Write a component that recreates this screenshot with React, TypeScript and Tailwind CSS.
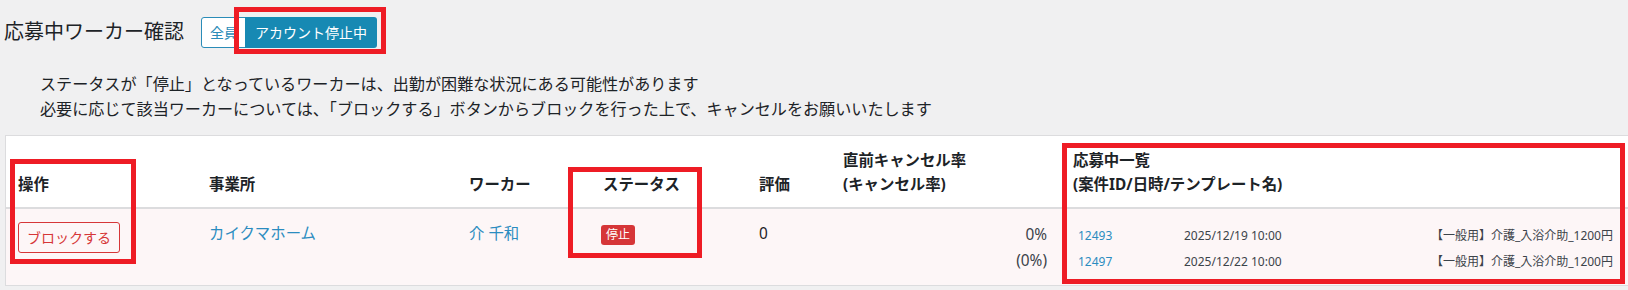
const font = "font-['Noto_Sans','Noto_Sans_CJK_JP',sans-serif]";

const applications = [
  { id: '12493', date: '2025/12/19 10:00', template: '【一般用】介護_入浴介助_1200円' },
  { id: '12497', date: '2025/12/22 10:00', template: '【一般用】介護_入浴介助_1200円' },
];

const cols = 'grid grid-cols-[191px_260px_134px_156px_84px_230px_1fr]';

function RedBox({ className }: { className: string }) {
  return <div className={`pointer-events-none absolute border-[5px] border-[#ee1c25] ${className}`} />;
}

export default function App() {
  return (
    <div className={`relative h-[290px] overflow-hidden bg-[#f0f0f1] text-[#1d2327] ${font}`}>
      <div className="flex h-[64px] items-center pl-[4px]">
        <h1 className="text-[20px] leading-none font-normal">応募中ワーカー確認</h1>
        <div className="ml-[17px] flex h-[31px] text-[14px]">
          <button className="rounded-l-[3px] border border-[#2a8cb8] bg-white px-[8px] text-[#2a8cb8]">全員</button>
          <button className="-ml-[2px] rounded-r-[3px] bg-[#1789b3] px-[10px] text-white">アカウント停止中</button>
        </div>
      </div>

      <div className="pt-[8px] pl-[40px] text-[16.1px] leading-[25px]">
        <p>ステータスが「停止」となっているワーカーは、出勤が困難な状況にある可能性があります</p>
        <p>必要に応じて該当ワーカーについては、「ブロックする」ボタンからブロックを行った上で、キャンセルをお願いいたします</p>
      </div>

      <div className="mt-[13px] ml-[5px] border-t border-l border-[#dcdcde] bg-white text-[15.4px]">
        <div className={`${cols} border-b-2 border-[#dcdcde] font-bold leading-[24px]`}>
          {[['操作'], ['事業所'], ['ワーカー'], ['ステータス'], ['評価'], ['直前キャンセル率', '(キャンセル率)'], ['応募中一覧', '(案件ID/日時/テンプレート名)']].map((lines, i) => (
            <div key={i} className="flex h-[71px] flex-col justify-end px-[12px] pt-[13px] pb-[10px]">
              {lines.map((l) => (
                <span key={l}>{l}</span>
              ))}
            </div>
          ))}
        </div>

        <div className={`${cols} h-[77px] border-b border-[#dcdcde] bg-[#fdf6f7] leading-[24px]`}>
          <div className="px-[12px] pt-[13px]">
            <button className="h-[31px] rounded-[3px] border border-[#d63638] px-[8px] text-[14px] text-[#d63638]">
              ブロックする
            </button>
          </div>
          <div className="px-[12px] pt-[13px] text-[#2b8cc0]">カイクマホーム</div>
          <div className="px-[12px] pt-[13px] text-[#2b8cc0]">介 千和</div>
          <div className="px-[10px] pt-[13px]">
            <span className="mt-[3px] inline-flex h-[20px] items-center rounded-[3px] bg-[#d63638] px-[5px] text-[12px] leading-none text-white">
              停止
            </span>
          </div>
          <div className="px-[12px] pt-[13px]">0</div>
          <div className="pt-[13px] pr-[14px] text-right leading-[26px] text-[#3c434a]">
            <p>0%</p>
            <p>(0%)</p>
          </div>
          <div className="pt-[14px] pr-[10px] pl-[12px] text-[12px] leading-[26px] text-[#3c434a]">
            {applications.map((a) => (
              <div key={a.id} className="grid grid-cols-[106px_1fr_auto]">
                <span className="pl-[5px] text-[#2b8cc0]">{a.id}</span>
                <span className="pl-[5px]">{a.date}</span>
                <span className="pr-[5px]">{a.template}</span>
              </div>
            ))}
          </div>
        </div>
      </div>

      <RedBox className="top-[7px] left-[234px] h-[47px] w-[152px]" />
      <RedBox className="top-[159px] left-[10px] h-[105px] w-[126px]" />
      <RedBox className="top-[167px] left-[568px] h-[91px] w-[134px]" />
      <RedBox className="top-[143px] left-[1062px] h-[141px] w-[563px]" />
    </div>
  );
}
